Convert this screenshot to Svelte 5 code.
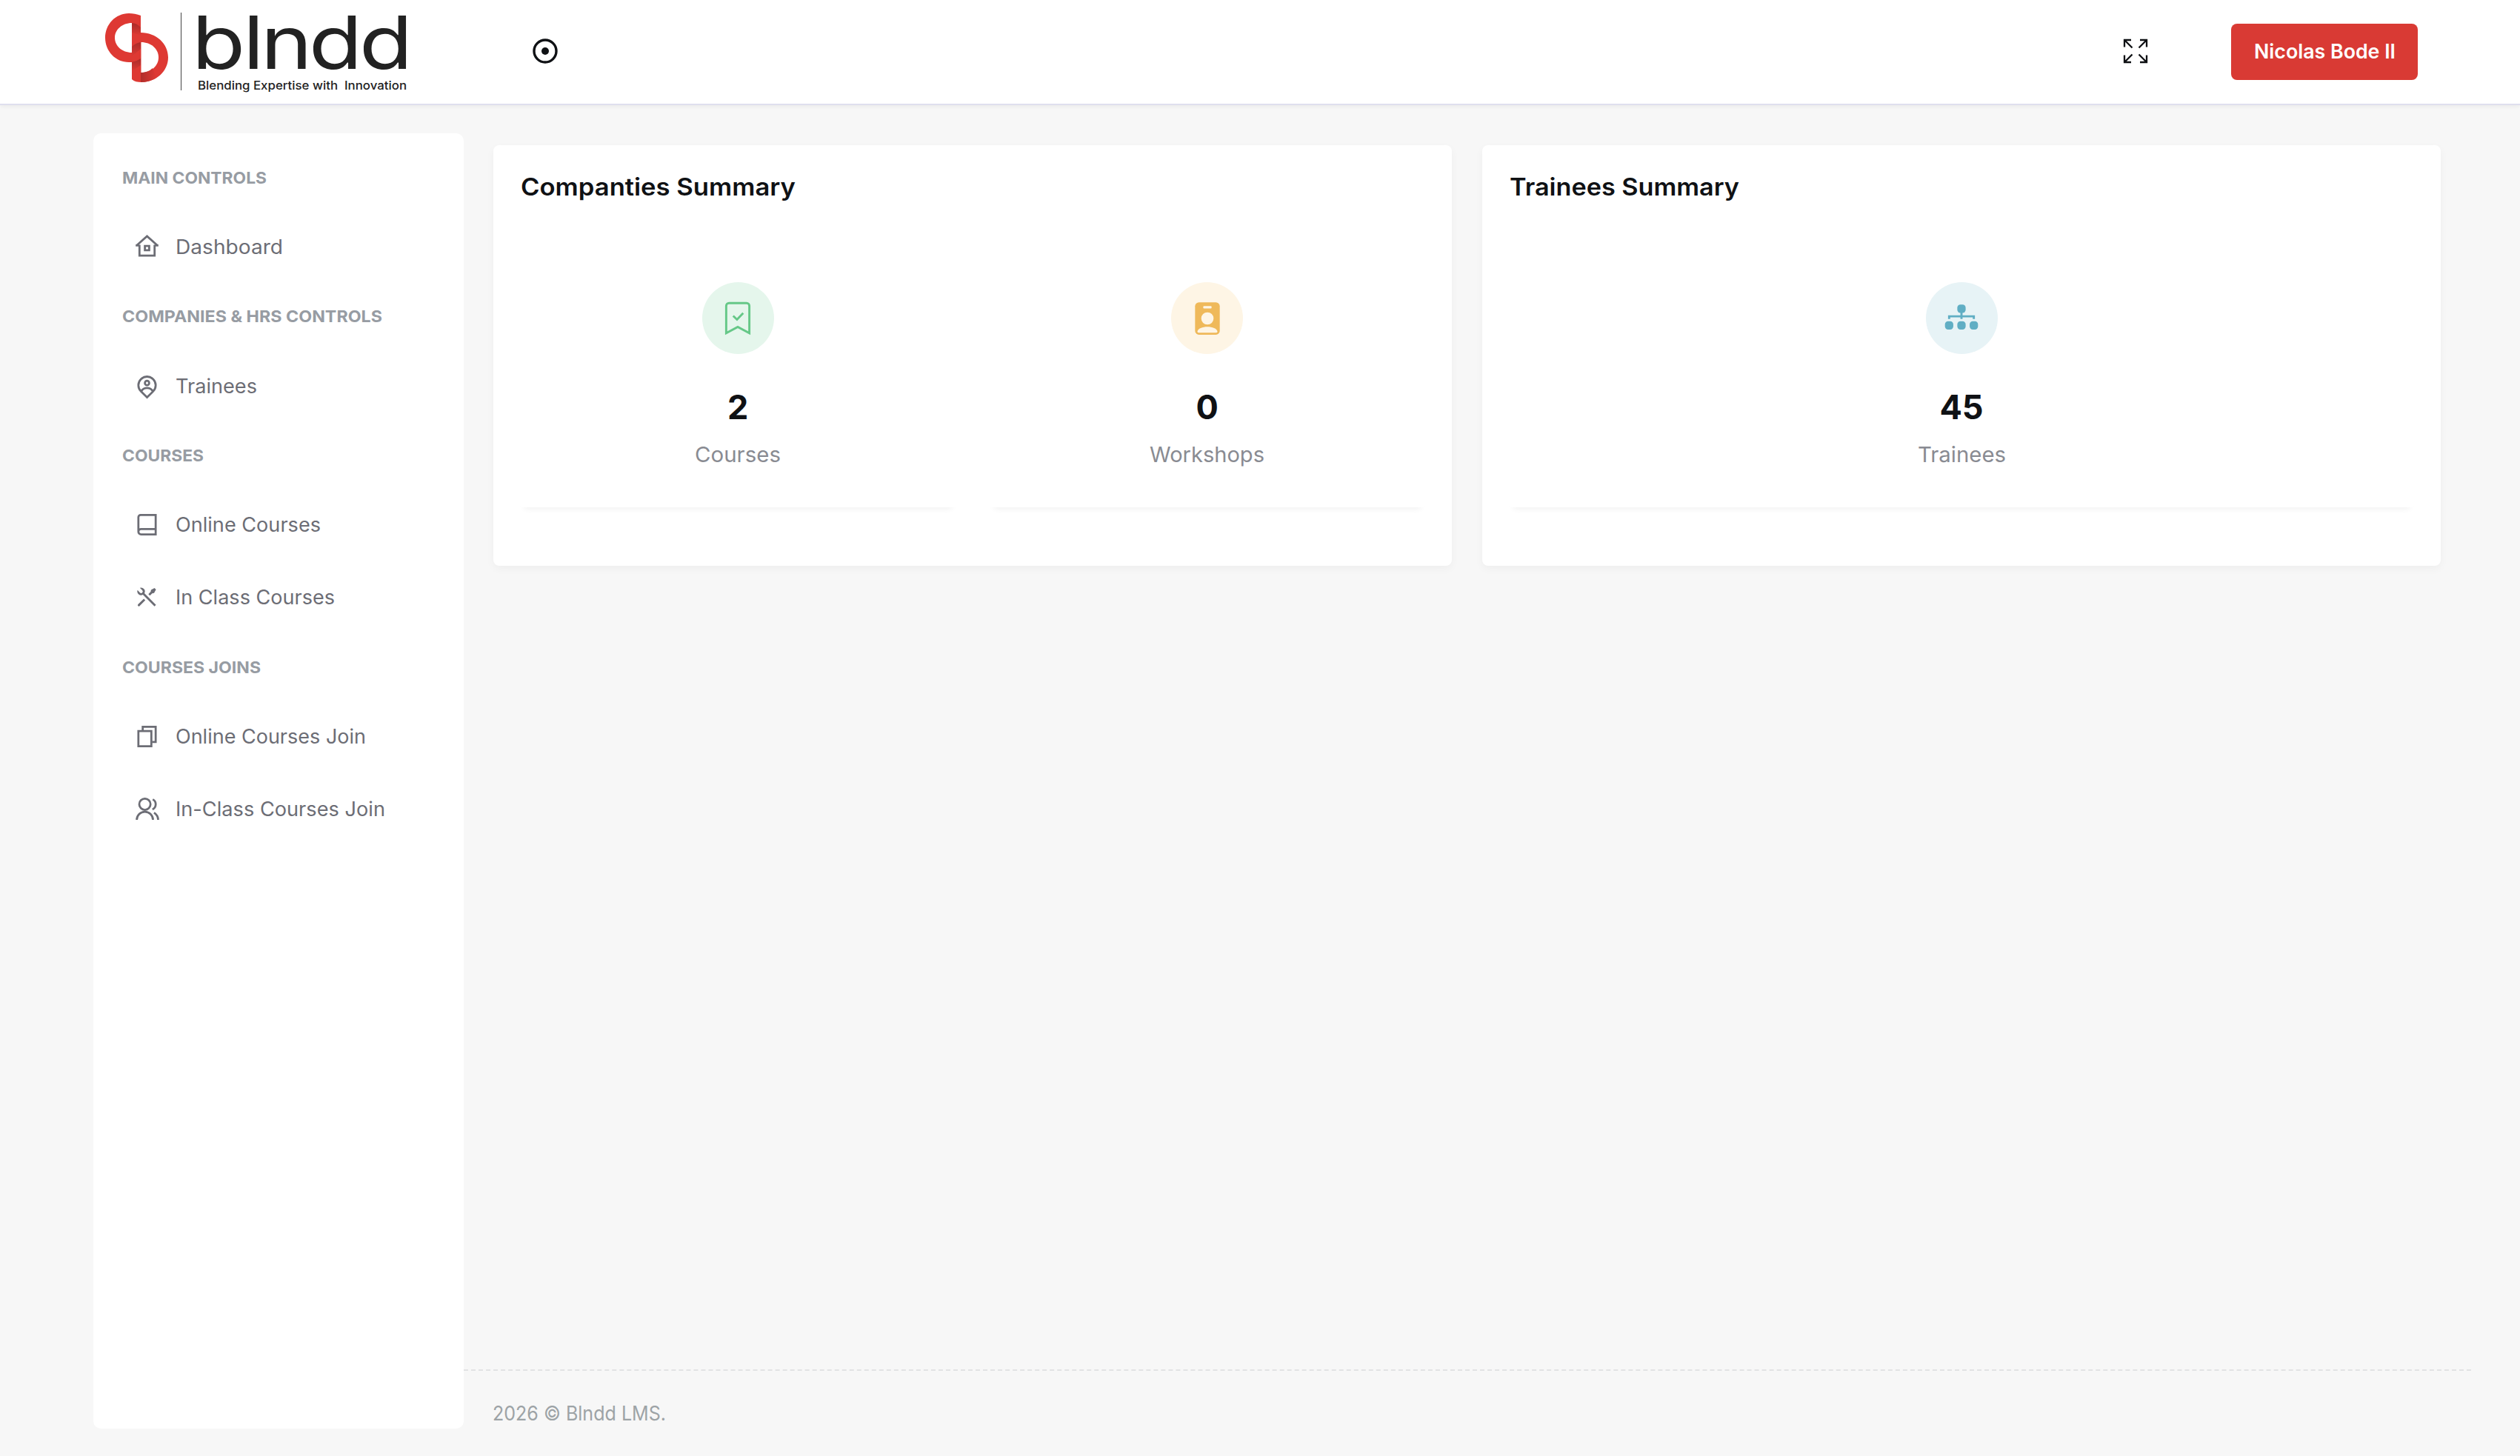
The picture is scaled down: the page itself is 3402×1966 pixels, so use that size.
<script lang="ts">
	interface Item {
		label: string;
		icon: string;
		width: number;
	}

	interface Section {
		title: string;
		width: number;
		items: Item[];
	}

	interface Stat {
		label: string;
		value: number;
		tone: 'green' | 'amber' | 'teal';
		width: number;
	}

	const sections: Section[] = [
		{
			title: 'Main Controls',
			width: 195,
			items: [{ label: 'Dashboard', icon: 'home', width: 145 }]
		},
		{
			title: 'Companies & HRs Controls',
			width: 351,
			items: [{ label: 'Trainees', icon: 'pin', width: 110 }]
		},
		{
			title: 'Courses',
			width: 110,
			items: [
				{ label: 'Online Courses', icon: 'book', width: 196 },
				{ label: 'In Class Courses', icon: 'tools', width: 215 }
			]
		},
		{
			title: 'Courses Joins',
			width: 187,
			items: [
				{ label: 'Online Courses Join', icon: 'copy', width: 257 },
				{ label: 'In-Class Courses Join', icon: 'users', width: 283 }
			]
		}
	];

	const cards: { title: string; width: number; stats: Stat[] }[] = [
		{
			title: 'Companties Summary',
			width: 371,
			stats: [
				{ label: 'Courses', value: 2, tone: 'green', width: 116 },
				{ label: 'Workshops', value: 0, tone: 'amber', width: 155 }
			]
		},
		{
			title: 'Trainees Summary',
			width: 310,
			stats: [{ label: 'Trainees', value: 45, tone: 'teal', width: 119 }]
		}
	];
</script>

<!-- Text set to a fixed measure, so labels keep their width in any fallback font -->
{#snippet fitted(text: string, width: number)}
	<svg class="fitted" {width} height="40" role="img" aria-label={text}>
		<text x="0" y="29" textLength={width} lengthAdjust="spacingAndGlyphs">{text}</text>
	</svg>
{/snippet}

<div class="page">
	<header class="topbar">
		<svg class="logo" width="420" height="140" viewBox="126 0 420 140" aria-label="blndd">
			<defs>
				<linearGradient id="fold" x1="0" y1="0" x2="0" y2="1">
					<stop offset="0" stop-color="#a92c29" />
					<stop offset="1" stop-color="#de3933" />
				</linearGradient>
				<linearGradient id="tail" x1="0" y1="0" x2="1" y2="0">
					<stop offset="0" stop-color="#b02e2b" />
					<stop offset="1" stop-color="#de3933" />
				</linearGradient>
			</defs>
			<path
				fill="#de3933"
				d="M190 21C185 19 179 18 174 18C156 18 142 33 142 51C142 69 156 84 174 84H178V71C165 71 155 62 155 51C155 40 165 31 178 31V107C181 110 186 111 191 111C211 111 227 96 227 77.500C227 59 211 44 190 44Z"
			/>
			<path fill="#fff" d="M190.500 57C204 57 214 66 214 77.500C214 89 204 98 190.500 98Z" />
			<path fill="url(#fold)" d="M178 31Q184 31 190 37V48L178 44Z" />
			<path fill="url(#fold)" d="M178 63Q183 58 190 57V66L178 76Z" />
			<path fill="url(#fold)" d="M178 84Q184 83 190 79V88L178 96Z" />
			<path fill="url(#tail)" d="M190 98Q200 98 206 92L211 105Q201 111 190 111Z" />
			<path d="M244.500 17V122" stroke="#444" />
			<text class="brand" transform="translate(259 0) scale(1.19 1)" x="0 58 78.200 132.800 190" y="93">blndd</text>
			<text class="tagline" x="267" y="120.500" textLength="282" lengthAdjust="spacingAndGlyphs">Blending Expertise with&nbsp; Innovation</text>
		</svg>

		<button class="icon-btn toggle" type="button" aria-label="Toggle sidebar">
			<svg width="34" height="34" viewBox="0 0 34 34">
				<circle cx="17" cy="17" r="15" fill="none" stroke="#0f1114" stroke-width="3.400" />
				<circle cx="17" cy="17" r="5" fill="#0f1114" />
			</svg>
		</button>

		<button class="icon-btn" type="button" aria-label="Fullscreen">
			<svg width="34" height="34" viewBox="0 0 34 34" fill="none" stroke="#0f1114" stroke-width="2.300">
				<path d="M2 11.500V2H11M2 2L12.500 12.500M23 2H32V11.500M32 2L21.500 12.500" />
				<path d="M2 22.500V32H11M2 32L12.500 21.500M23 32H32V22.500M32 32L21.500 21.500" />
			</svg>
		</button>

		<button class="account" type="button">{@render fitted('Nicolas Bode II', 191)}</button>
	</header>

	<div class="body">
		<aside class="sidebar">
			{#each sections as section (section.title)}
				<h2>{@render fitted(section.title.toUpperCase(), section.width)}</h2>
				{#each section.items as item (item.label)}
					<a class="item" href="#{item.icon}">
						<svg class="nav-icon" viewBox="0 0 24 24">
							{#if item.icon === 'home'}
								<path d="M5 10V20H19V10M1.500 10.500H4.500M19.500 10.500H22.500M2.500 10.500L12 2L21.500 10.500M10 11H14V15H10Z" />
							{:else if item.icon === 'pin'}
								<path d="M12 22.300L6.300 16.700A8 8 0 1 1 17.700 16.700ZM6.800 16.500C9 12.700 15 12.700 17.200 16.500" />
								<circle cx="12" cy="9" r="2" />
							{:else if item.icon === 'book'}
								<path d="M20 16H6.500A2.500 2.500 0 0 0 4 18.500M20 21H6.500A2.500 2.500 0 0 1 4 18.500V5A2 2 0 0 1 6 3H20Z" />
							{:else if item.icon === 'tools'}
								<path
									class="solid"
									d="M5.330 3.271a3.500 3.500 0 0 1 4.254 4.963l10.709 10.710-1.414 1.414-10.710-10.710a3.502 3.502 0 0 1-4.962-4.255L5.444 7.630a1.500 1.500 0 1 0 2.121-2.121L5.329 3.270zm10.367 1.884l3.182-1.768 1.414 1.414-1.768 3.182-1.768.354-2.120 2.121-1.415-1.414 2.121-2.121.354-1.768zm-6.718 8.132l1.414 1.414-5.303 5.303a1 1 0 0 1-1.492-1.327l.078-.087 5.303-5.303z"
								/>
							{:else if item.icon === 'copy'}
								<path d="M8 6V3H20V17H17M4 7H16V21H4Z" />
							{:else}
								<circle cx="10" cy="7.500" r="5.200" />
								<path d="M2.500 22A7.500 7.500 0 0 1 17.500 22M17.300 3A5.200 5.200 0 0 1 17 12.300M18.500 15.300A8 8 0 0 1 22.300 22" />
							{/if}
						</svg>
						{@render fitted(item.label, item.width)}
					</a>
				{/each}
			{/each}
		</aside>

		<div class="content">
			<main class="cards">
				{#each cards as card (card.title)}
					<section class="card">
						<h3>{@render fitted(card.title, card.width)}</h3>
						<div class="stats">
							{#each card.stats as stat (stat.label)}
								<div class="stat">
									<div class="badge {stat.tone}">
										<svg width="50" height="50" viewBox="0 0 24 24">
											{#if stat.tone === 'green'}
												<path
													d="M4.500 21.500V3.800A1.800 1.800 0 0 1 6.300 2H17.700A1.800 1.800 0 0 1 19.500 3.800V21.500L12 17.500Z M9 10.300L11.500 12.700L15.500 8.500"
													fill="none"
													stroke="currentColor"
													stroke-width="1.400"
												/>
											{:else if stat.tone === 'amber'}
												<rect x="4" y="1.500" width="16" height="21" rx="2.500" fill="currentColor" />
												<rect x="9.300" y="4" width="5.400" height="1.500" rx=".5" fill="#fef5e5" />
												<circle cx="12" cy="12" r="4" fill="#fef5e5" />
												<path d="M5.500 20.500C6 16.300 18 16.300 18.500 20.500Q18.500 21.200 17.800 21.200H6.200Q5.500 21.200 5.500 20.500Z" fill="#fef5e5" />
											{:else}
												<g fill="currentColor">
													<rect x="9.300" y="3" width="5.400" height="5.400" rx="2" />
													<rect x="1.300" y="13.800" width="5.400" height="5.400" rx="2" />
													<rect x="9.300" y="13.800" width="5.400" height="5.400" rx="2" />
													<rect x="17.300" y="13.800" width="5.400" height="5.400" rx="2" />
												</g>
												<path d="M12 8V12.300M4 12.300V10.600H20V12.300" fill="none" stroke="currentColor" stroke-width="1.400" />
											{/if}
										</svg>
									</div>
									<strong>{stat.value}</strong>
									<span class="stat-label">{@render fitted(stat.label, stat.width)}</span>
								</div>
							{/each}
						</div>
					</section>
				{/each}
			</main>

			<footer>{@render fitted('2026 © Blndd LMS.', 234)}</footer>
		</div>
	</div>
</div>

<style>
	:global(body) {
		margin: 0;
		background: #f7f7f7;
	}

	.page {
		display: flex;
		flex-direction: column;
		height: 1966px;
		font-family: Inter, 'Open Sans', sans-serif;
		color: #0f1114;
	}

	.topbar {
		display: flex;
		align-items: center;
		box-sizing: border-box;
		height: 142px;
		padding: 0 138px 0 126px;
		background: #fff;
		border-bottom: 2px solid #dfdfee;
		box-shadow: 0 2px 6px rgba(0, 0, 0, 0.06);
	}

	.logo,
	.fitted {
		display: block;
		overflow: visible;
	}

	.logo .brand {
		font-size: 99px;
		font-weight: 400;
		fill: #222;
	}

	.logo .tagline {
		font-size: 16px;
		font-weight: 500;
		fill: #222;
	}

	.fitted text {
		fill: currentColor;
	}

	button {
		padding: 0;
		border: 0;
		background: none;
		font-family: inherit;
		cursor: pointer;
	}

	.icon-btn {
		display: flex;
		margin-right: 112px;
		padding-bottom: 2px;
	}

	.toggle {
		margin: 0 auto 0 173px;
	}

	.account {
		display: flex;
		align-items: center;
		justify-content: center;
		width: 252px;
		height: 76px;
		border-radius: 8px;
		background: #d93a34;
		color: #fff;
		font-size: 27px;
		font-weight: 600;
	}

	.body {
		display: flex;
		flex: 1;
	}

	.sidebar {
		box-sizing: border-box;
		width: 500px;
		height: 1749px;
		margin: 38px 0 0 126px;
		padding-top: 15.500px;
		border-radius: 10px;
		background: #fff;
	}

	h2 {
		display: flex;
		align-items: center;
		box-sizing: border-box;
		height: 89px;
		margin: 0;
		padding: 0 0 2px 39px;
		color: #979ca3;
		font-size: 22px;
		font-weight: 700;
	}

	.item {
		display: flex;
		align-items: center;
		gap: 21px;
		height: 98.400px;
		padding-left: 55px;
		color: #6c6d75;
		font-size: 26.500px;
		text-decoration: none;
	}

	.item .fitted {
		margin-top: 1px;
	}

	.nav-icon {
		width: 35px;
		height: 35px;
		fill: none;
		stroke: currentColor;
		stroke-width: 1.900;
	}

	.nav-icon .solid {
		fill: currentColor;
		stroke: none;
	}

	.content {
		display: flex;
		flex: 1;
		flex-direction: column;
		justify-content: space-between;
	}

	.cards {
		display: flex;
		gap: 41px;
		padding: 54px 107px 0 40px;
	}

	.card {
		box-sizing: border-box;
		flex: 1;
		height: 568px;
		border-radius: 8px;
		background: #fff;
		box-shadow: 0 4px 12px rgba(0, 0, 0, 0.04);
	}

	h3 {
		display: flex;
		align-items: center;
		box-sizing: border-box;
		height: 114px;
		margin: 0;
		padding: 4px 0 0 37px;
		font-size: 32px;
		font-weight: 600;
	}

	.stats {
		display: flex;
		gap: 41px;
		margin: 39px 34px 0;
	}

	.stat {
		display: flex;
		flex: 1;
		flex-direction: column;
		align-items: center;
		box-sizing: border-box;
		height: 336px;
		padding-top: 32px;
		border-radius: 8px;
		box-shadow: 0 10px 8px -8px rgba(0, 0, 0, 0.06);
	}

	.badge {
		display: flex;
		align-items: center;
		justify-content: center;
		width: 97px;
		height: 97px;
		border-radius: 50%;
	}

	.green {
		background: #e5f6ec;
		color: #66c888;
	}

	.amber {
		background: #fef5e5;
		color: #efb95a;
	}

	.teal {
		background: #e7f3f6;
		color: #60aec4;
	}

	strong {
		margin-top: 44px;
		font-size: 45px;
		font-weight: 700;
		line-height: 56px;
	}

	.stat-label {
		margin-top: 17px;
		color: #898b92;
		font-size: 29px;
	}

	footer {
		display: flex;
		box-sizing: border-box;
		height: 117px;
		margin-right: 66px;
		padding: 38px 0 0 39px;
		border-top: 2px dashed #e2e3e4;
		color: #9da3a6;
		font-size: 27px;
	}
</style>
